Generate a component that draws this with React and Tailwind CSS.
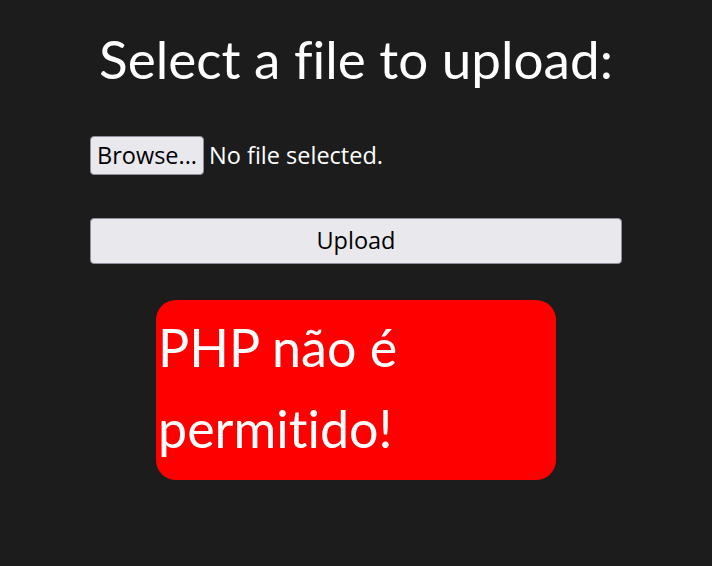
import React from "react";

export default function App() {
  return (
    <div className="min-h-screen w-full bg-[#1c1c1c] flex flex-col items-center font-['Lato',sans-serif] text-white [font-variant-ligatures:none]">
      <h1 className="mt-[26px] text-[53px] leading-[66px] font-normal">
        Select a file to upload:
      </h1>

      <form className="mt-[44px] w-[532px] flex flex-col font-['Open_Sans',sans-serif]">
        <div className="flex items-center h-[39px] text-[23.5px]">
          <button
            type="button"
            className="h-[39px] px-[6px] bg-[#e9e9ed] text-black border border-[#8f8f9d] rounded-[4px] leading-none"
          >
            Browse...
          </button>
          <span className="ml-[5px] text-white">No file selected.</span>
        </div>

        <button
          type="button"
          className="mt-[43px] h-[46px] w-full bg-[#e9e9ed] text-black text-[23.5px] border border-[#8f8f9d] rounded-[4px]"
        >
          Upload
        </button>
      </form>

      <div className="mt-[36px] w-[400px] h-[180px] bg-[#ff0000] rounded-[20px] pl-[2px] pt-[7px] text-[52px] leading-[81px]">
        PHP não é permitido!
      </div>
    </div>
  );
}
